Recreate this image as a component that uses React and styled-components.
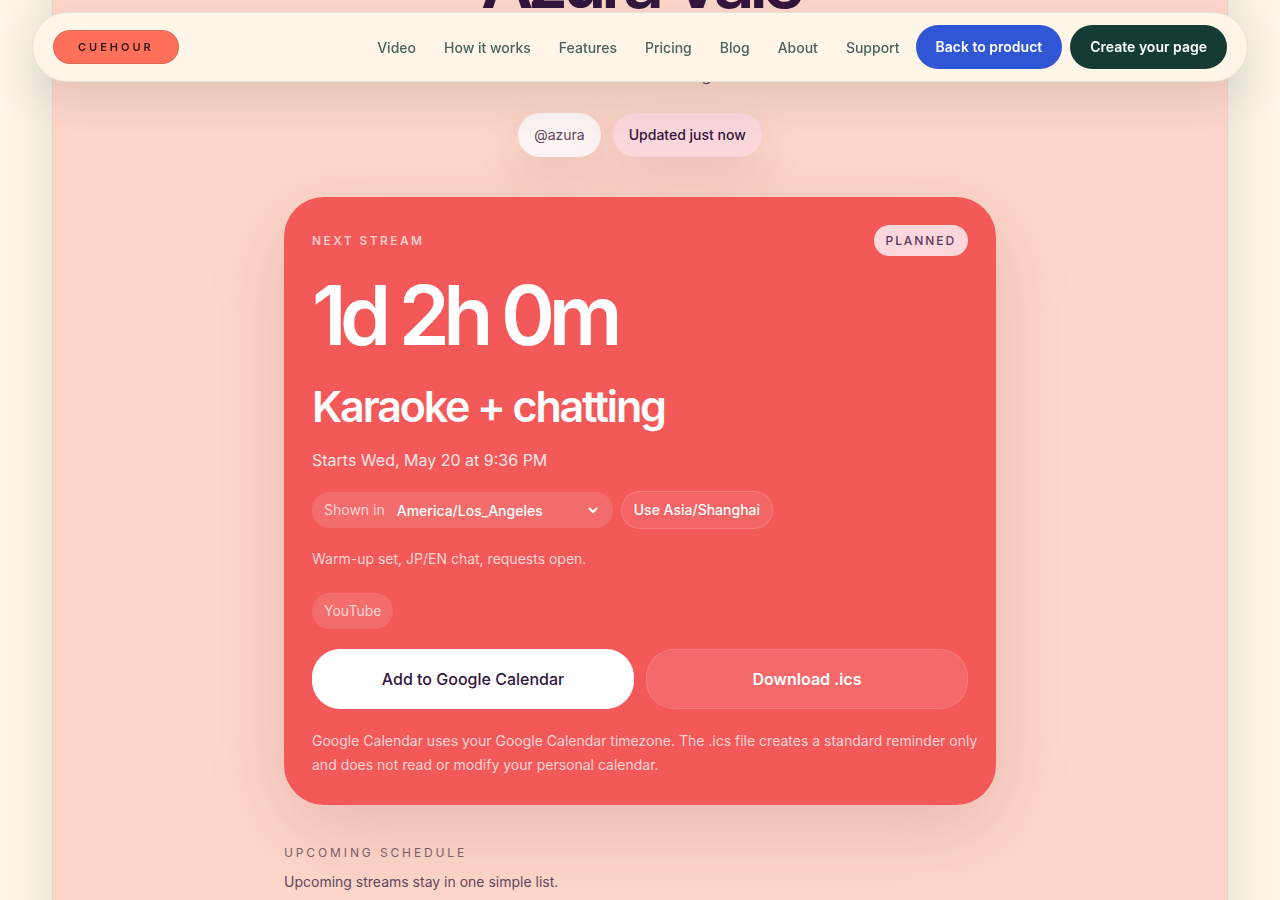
import React, { useState } from 'react'
import styled, { createGlobalStyle, css } from 'styled-components'

const GlobalStyle = createGlobalStyle`
  *, *::before, *::after {
    box-sizing: border-box;
  }
  body {
    margin: 0;
    background: #fff6e9;
    font-family: Inter, "Liberation Sans", sans-serif;
    color: #32163d;
  }
  h1, h2, p {
    margin: 0;
  }
  a {
    text-decoration: none;
  }
  button, select {
    font-family: inherit;
  }
`

const Page = styled.div`
  min-height: 100vh;
  display: flex;
  justify-content: center;
  overflow: hidden;
  padding: 0 52px;
`

const Header = styled.header`
  position: fixed;
  z-index: 10;
  top: 12px;
  left: 32px;
  right: 32px;
  display: flex;
  align-items: center;
  justify-content: space-between;
  padding: 12px 20px;
  border: 1px solid rgba(20, 60, 52, 0.1);
  border-radius: 36px;
  background: #fff6e9;
  box-shadow: 0 18px 48px rgba(20, 60, 52, 0.12);
`

const Logo = styled.a`
  padding: 0 24px;
  border: 1px solid rgba(20, 60, 52, 0.16);
  border-radius: 17px;
  background: #ff705a;
  color: #32161a;
  font-size: 11px;
  font-weight: 600;
  letter-spacing: 3px;
  line-height: 32px;
`

const HeaderRight = styled.div`
  display: flex;
  align-items: center;
  gap: 16px;
`

const Nav = styled.nav`
  display: flex;
  gap: 28px;
`

const NavLink = styled.a`
  color: #4a645c;
  font-size: 14px;
  font-weight: 500;
`

const Actions = styled.div`
  display: flex;
  gap: 8px;
`

const ActionLink = styled.a`
  padding: 0 20px;
  border-radius: 22px;
  background: ${props => props.$primary ? '#143c34' : '#3056d6'};
  color: #fff;
  font-size: 14px;
  font-weight: 600;
  line-height: 44px;
`

const Panel = styled.main`
  flex: 1;
  display: flex;
  flex-direction: column;
  align-items: center;
  margin: -120px 0 -60px;
  padding: 65px 24px 66px;
  border: 1px solid rgba(20, 60, 52, 0.05);
  background: #fed6ca;
  box-shadow: 0 24px 52px rgba(20, 60, 52, 0.12);
`

const Name = styled.h1`
  font-size: 72px;
  font-weight: 600;
  line-height: 72px;
  letter-spacing: -0.08em;
`

const Tagline = styled.p`
  margin-top: 43px;
  color: #63475f;
  font-size: 16px;
  line-height: 28px;
`

const Badges = styled.div`
  display: flex;
  gap: 12px;
  margin: 24px 0 40px;
`

const Badge = styled.span`
  padding: 0 16px;
  border-radius: 22px;
  background: ${props => props.$pink ? '#fdd7dc' : '#fdf5f3'};
  color: ${props => props.$pink ? '#32163d' : '#63475f'};
  font-size: 14px;
  font-weight: ${props => props.$pink ? 500 : 400};
  line-height: 44px;
  box-shadow: 0 18px 48px rgba(90, 40, 40, 0.12);
`

const Content = styled.div`
  width: 100%;
  max-width: 712px;
`

const Card = styled.section`
  padding: 28px;
  border-radius: 40px;
  background: #f35959;
  color: #fff;
  box-shadow: 0 24px 80px rgba(100, 40, 30, 0.16);
`

const CardTop = styled.div`
  display: flex;
  align-items: center;
  justify-content: space-between;
`

const Eyebrow = styled.p`
  color: ${props => props.$dark ? '#7b5c6b' : '#fccdcd'};
  font-size: 12px;
  font-weight: ${props => props.$dark ? 400 : 600};
  letter-spacing: ${props => props.$dark ? '0.24em' : '0.2em'};
  line-height: 20px;
  text-transform: uppercase;
`

const Status = styled.span`
  padding: 0 12px;
  border-radius: 16px;
  background: #fdd7dc;
  color: #553a5c;
  font-size: 12px;
  font-weight: 500;
  letter-spacing: 0.16em;
  line-height: 31px;
  text-transform: uppercase;
`

const Countdown = styled.p`
  margin-top: 18px;
  font-size: 82px;
  font-weight: 600;
  line-height: 84px;
  letter-spacing: -0.08em;
`

const StreamTitle = styled.h2`
  margin-top: 24px;
  font-size: 43px;
  font-weight: 600;
  line-height: 48px;
  letter-spacing: -0.05em;
`

const Starts = styled.p`
  margin: 16px 0 17px;
  color: #fee6e6;
  font-size: 16px;
  line-height: 28px;
`

const Row = styled.div`
  display: flex;
  align-items: center;
  gap: 8px;
`

const pill = css`
  border-radius: 20px;
  background: rgba(255, 255, 255, 0.12);
  font-size: 14px;
  line-height: 36px;
`

const Zone = styled.label`
  ${pill}
  display: flex;
  align-items: center;
  gap: 12px;
  padding: 0 12px;
  color: #fdd5d5;
`

const SelectWrap = styled.span`
  position: relative;
  display: flex;
  align-items: center;
`

const Select = styled.select`
  appearance: none;
  width: 204px;
  height: 36px;
  padding: 0;
  border: 0;
  background: transparent;
  color: #fff;
  font-size: 14px;
  font-weight: 500;

  option {
    color: #32163d;
  }
`

const Chevron = styled.svg`
  position: absolute;
  right: 3px;
  pointer-events: none;
`

const ZoneButton = styled.button`
  ${pill}
  padding: 0 12px;
  border: 1px solid rgba(255, 255, 255, 0.16);
  background: rgba(255, 255, 255, 0.08);
  color: #fff;
  font-weight: 500;
`

const Description = styled.p`
  margin: 16px 0 20px;
  color: #fdd5d5;
  font-size: 14px;
  line-height: 28px;
`

const Platform = styled.span`
  ${pill}
  padding: 0 12px;
  color: #fdd5d5;
`

const Buttons = styled.div`
  display: grid;
  grid-template-columns: 1fr 1fr;
  gap: 12px;
  margin: 20px 0;
`

const CardButton = styled.button`
  height: 60px;
  border: 1px solid ${props => props.$solid ? '#fff' : 'rgba(255, 255, 255, 0.12)'};
  border-radius: 28px;
  background: ${props => props.$solid ? '#fff' : 'rgba(255, 255, 255, 0.1)'};
  color: ${props => props.$solid ? '#32163d' : '#fff'};
  font-size: 16px;
  font-weight: ${props => props.$solid ? 500 : 600};
`

const Note = styled.p`
  margin-right: -16px;
  color: #fdd5d5;
  font-size: 14px;
  line-height: 24px;
`

const Schedule = styled.section`
  margin-top: 38px;
`

const ScheduleText = styled.p`
  margin-top: 7px;
  color: #63475f;
  font-size: 14px;
  line-height: 24px;
`

const links = ['Video', 'How it works', 'Features', 'Pricing', 'Blog', 'About', 'Support']

const SiteHeader = () => (
  <Header>
    <Logo href="#home">CUEHOUR</Logo>
    <HeaderRight>
      <Nav>
        {links.map(link => <NavLink href="#" key={link}>{link}</NavLink>)}
      </Nav>
      <Actions>
        <ActionLink href="#product">Back to product</ActionLink>
        <ActionLink href="#create" $primary>Create your page</ActionLink>
      </Actions>
    </HeaderRight>
  </Header>
)

const NextStream = () => {
  const [zone, setZone] = useState('America/Los_Angeles')

  return (
    <Card>
      <CardTop>
        <Eyebrow>Next stream</Eyebrow>
        <Status>Planned</Status>
      </CardTop>
      <Countdown>1d 2h 0m</Countdown>
      <StreamTitle>Karaoke + chatting</StreamTitle>
      <Starts>Starts Wed, May 20 at 9:36 PM</Starts>
      <Row>
        <Zone htmlFor="zone">
          Shown in
          <SelectWrap>
            <Select id="zone" value={zone} onChange={e => setZone(e.target.value)}>
              <option>America/Los_Angeles</option>
              <option>Asia/Shanghai</option>
            </Select>
            <Chevron width="10" height="8" viewBox="0 0 10 8" fill="none" stroke="#fff" strokeWidth="2">
              <path d="M1 2l4 4 4-4" />
            </Chevron>
          </SelectWrap>
        </Zone>
        <ZoneButton onClick={() => setZone('Asia/Shanghai')}>Use Asia/Shanghai</ZoneButton>
      </Row>
      <Description>Warm-up set, JP/EN chat, requests open.</Description>
      <Row>
        <Platform>YouTube</Platform>
      </Row>
      <Buttons>
        <CardButton $solid>Add to Google Calendar</CardButton>
        <CardButton>Download .ics</CardButton>
      </Buttons>
      <Note>
        Google Calendar uses your Google Calendar timezone. The .ics file creates a standard reminder only
        and does not read or modify your personal calendar.
      </Note>
    </Card>
  )
}

const App = () => (
  <>
    <GlobalStyle />
    <SiteHeader />
    <Page>
      <Panel>
        <Name>Azura Vale</Name>
        <Tagline>Karaoke + chatting</Tagline>
        <Badges>
          <Badge>@azura</Badge>
          <Badge $pink>Updated just now</Badge>
        </Badges>
        <Content>
          <NextStream />
          <Schedule>
            <Eyebrow $dark>Upcoming schedule</Eyebrow>
            <ScheduleText>Upcoming streams stay in one simple list.</ScheduleText>
          </Schedule>
        </Content>
      </Panel>
    </Page>
  </>
)

export default App
